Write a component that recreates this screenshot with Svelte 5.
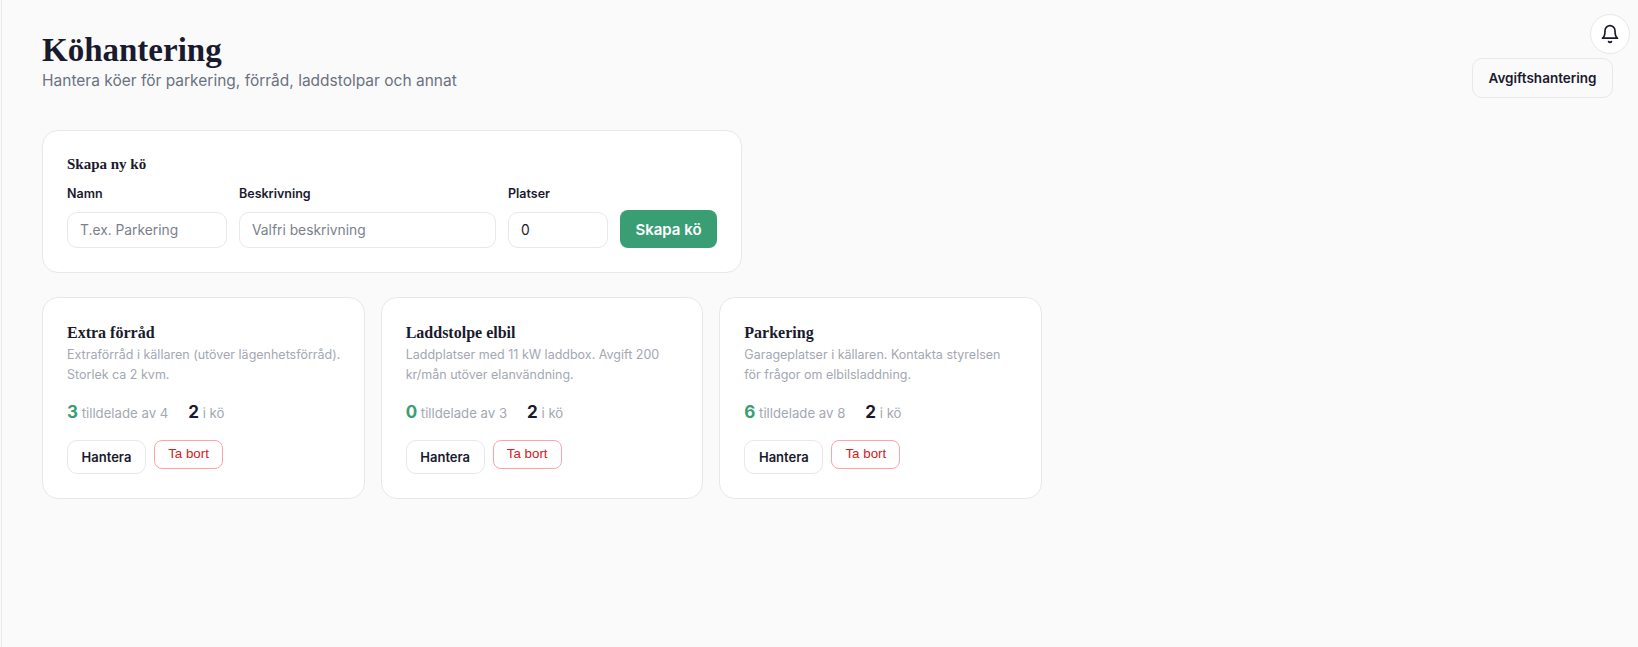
<script>
  const queues = [
    { name: 'Extra förråd', text: 'Extraförråd i källaren (utöver lägenhetsförråd). Storlek ca 2 kvm.', assigned: 3, total: 4, waiting: 2 },
    { name: 'Laddstolpe elbil', text: 'Laddplatser med 11 kW laddbox. Avgift 200 kr/mån utöver elanvändning.', assigned: 0, total: 3, waiting: 2 },
    { name: 'Parkering', text: 'Garageplatser i källaren. Kontakta styrelsen för frågor om elbilsladdning.', assigned: 6, total: 8, waiting: 2 }
  ];
</script>

<div class="shell">
  <button class="bell" aria-label="Notiser">
    <svg width="20" height="20" viewBox="0 0 24 24" fill="none" stroke="currentColor" stroke-width="2" stroke-linecap="round" stroke-linejoin="round">
      <path d="M6 8a6 6 0 0 1 12 0c0 7 3 9 3 9H3s3-2 3-9" />
      <path d="M10.3 21a1.94 1.94 0 0 0 3.4 0" />
    </svg>
  </button>

  <main>
    <header>
      <div>
        <h1>Köhantering</h1>
        <p class="sub">Hantera köer för parkering, förråd, laddstolpar och annat</p>
      </div>
      <button class="btn outline fees">Avgiftshantering</button>
    </header>

    <section class="card create">
      <h2>Skapa ny kö</h2>
      <form class="fields" onsubmit={(e) => e.preventDefault()}>
        <label class="f-name"><span>Namn</span><input placeholder="T.ex. Parkering" /></label>
        <label class="f-desc"><span>Beskrivning</span><input placeholder="Valfri beskrivning" /></label>
        <label class="f-slots"><span>Platser</span><input type="number" value="0" /></label>
        <button class="create-btn" type="submit">Skapa kö</button>
      </form>
    </section>

    <div class="grid">
      {#each queues as q}
        <article class="card queue">
          <h3>{q.name}</h3>
          <p class="desc">{q.text}</p>
          <div class="stats">
            <span><strong class="green">{q.assigned}</strong> tilldelade av {q.total}</span>
            <span><strong>{q.waiting}</strong> i kö</span>
          </div>
          <div class="actions">
            <button class="btn outline manage">Hantera</button>
            <button class="remove">Ta bort</button>
          </div>
        </article>
      {/each}
    </div>
  </main>
</div>

<style>
  :global(body) { background: #fafafa; }
  .shell { position: relative; min-height: 647px; box-sizing: border-box; margin-left: 1px; border-left: 1px solid #e8e8e8; background: #fafafa; color: #1a1a2e; font-family: "Inter", "Liberation Sans", sans-serif; }
  main { padding: 32px 25px 0 40px; }
  header { display: flex; justify-content: space-between; align-items: flex-start; margin-bottom: 32px; }
  h1 { margin: 0; font: 700 33px/37px "Liberation Serif", serif; }
  .sub { margin: 0; color: #6b7280; font-size: 15.5px; line-height: 24px; }
  .bell { position: absolute; top: 14px; right: 8px; display: grid; place-items: center; width: 40px; height: 40px; padding: 0; border: 1px solid #e8e8e8; border-radius: 50%; background: #fff; color: #1a1a2e; }
  .btn { box-sizing: border-box; border: 1px solid #e8e8e8; border-radius: 10px; background: #fafafa; color: #1a1a2e; font: 600 13.5px "Inter", sans-serif; }
  .fees { width: 141px; height: 40px; margin-top: 26px; }
  .card { box-sizing: border-box; border: 1px solid #e8e8e8; border-radius: 16px; background: #fff; }
  .create { width: 700px; height: 143px; padding: 24px; }
  h2 { margin: 0 0 12px; font: 700 15px/19px "Liberation Serif", serif; }
  .fields { display: flex; align-items: flex-end; gap: 12px; }
  label { display: flex; flex-direction: column; gap: 10px; }
  label span { font-size: 12.5px; font-weight: 600; line-height: 16px; }
  .f-name { width: 160px; }
  .f-desc { width: 257px; }
  .f-slots { width: 100px; }
  input { box-sizing: border-box; width: 100%; height: 36px; padding: 0 12px; border: 1px solid #e8e8e8; border-radius: 10px; background: #fff; color: #1a1a2e; font: 13.8px "Inter", sans-serif; outline: none; appearance: textfield; }
  input::placeholder { color: #7b818c; }
  .create-btn { width: 97px; height: 38px; padding: 0; border: 0; border-radius: 8px; background: #3a9e75; color: #fff; font: 600 15px "Inter", sans-serif; }
  .grid { display: grid; grid-template-columns: repeat(3, 1fr); gap: 16px; width: 1000px; margin-top: 24px; }
  .queue { height: 202px; padding: 24px; }
  h3 { margin: 0; font: 700 16px/22px "Liberation Serif", serif; }
  .desc { margin: 1px -3px 0 0; color: #a3a8b3; font-size: 12.5px; line-height: 20px; }
  .stats { display: flex; gap: 20px; margin-top: 13px; height: 28px; align-items: center; color: #a3a8b3; font-size: 13.2px; }
  .stats strong { color: #1a1a2e; font-size: 17px; font-weight: 700; }
  .stats strong.green { color: #3a9e75; }
  .actions { display: flex; align-items: flex-start; gap: 8px; margin-top: 14px; }
  .manage { width: 79px; height: 34px; background: #fff; font-size: 13px; }
  .remove { box-sizing: border-box; width: 69px; height: 29px; padding: 0 0 2px; border: 1px solid #fca5a5; border-radius: 8px; background: #fff; color: #d32020; font: 13.33px "Liberation Sans", Arial, sans-serif; }
</style>
